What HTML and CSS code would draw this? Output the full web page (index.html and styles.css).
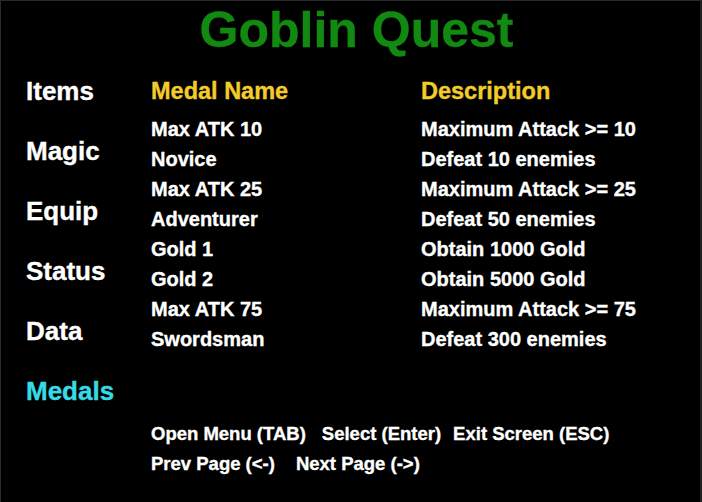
FILE: index.html
```html
<!DOCTYPE html>
<html>
<head>
<meta charset="utf-8">
<title>Goblin Quest</title>
<link rel="stylesheet" href="styles.css">
</head>
<body>

<div class="screen">
  <h1 class="title">Goblin Quest</h1>

  <div class="main">
    <ul class="menu">
      <li>Items</li>
      <li>Magic</li>
      <li>Equip</li>
      <li>Status</li>
      <li>Data</li>
      <li class="active">Medals</li>
    </ul>

    <div class="content">
      <div class="medals">
        <div class="head">Medal Name</div> <div class="head">Description</div>
        <div>Max ATK 10</div> <div>Maximum Attack &gt;= 10</div>
        <div>Novice</div> <div>Defeat 10 enemies</div>
        <div>Max ATK 25</div> <div>Maximum Attack &gt;= 25</div>
        <div>Adventurer</div> <div>Defeat 50 enemies</div>
        <div>Gold 1</div> <div>Obtain 1000 Gold</div>
        <div>Gold 2</div> <div>Obtain 5000 Gold</div>
        <div>Max ATK 75</div> <div>Maximum Attack &gt;= 75</div>
        <div>Swordsman</div> <div>Defeat 300 enemies</div>
      </div>

      <div class="help">
        <div class="keys">
          <span>Open Menu (TAB)</span>
          <span class="k2">Select (Enter)</span>
          <span class="k3">Exit Screen (ESC)</span>
        </div>
        <div class="keys">
          <span>Prev Page (&lt;-)</span>
          <span class="k4">Next Page (-&gt;)</span>
        </div>
      </div>
    </div>
  </div>
</div>

</body>
</html>
```

FILE: styles.css
```css
html,body,h1,ul,li,div{margin:0;padding:0;}
*{box-sizing:border-box;}
body{
  background:#000;
  color:#fff;
  font-family:"Liberation Sans",Arial,Helvetica,sans-serif;
  font-weight:bold;
  -webkit-text-stroke:0.35px currentColor;
}
.screen{
  width:702px;
  height:502px;
  background:#000;
  border-top:1px solid #2a2a2a;
  border-left:1px solid #2a2a2a;
  border-right:2px solid #222;
}
.title{
  color:#128a12;
  font-size:50px;
  line-height:58px;
  text-align:center;
  padding-left:12px;
}
.main{
  display:grid;
  grid-template-columns:125px 1fr;
  padding-left:25px;
}
.menu{
  list-style:none;
  padding-top:2px;
}
.menu li{
  font-size:26px;
  line-height:60px;
  height:60px;
}
.menu .active{color:#36dbe6;}
.content{padding-top:17px;}
.medals{
  display:grid;
  grid-template-columns:270px 1fr;
  font-size:20px;
  line-height:30px;
}
.medals .head{
  color:#f2cc2a;
  font-size:23.5px;
  margin-bottom:8px;
}
.help{
  margin-top:65px;
  font-size:18.5px;
  line-height:30px;
}
.keys{display:flex;}
.k2{margin-left:16px;}
.k3{margin-left:12px;}
.k4{margin-left:21px;}
```
